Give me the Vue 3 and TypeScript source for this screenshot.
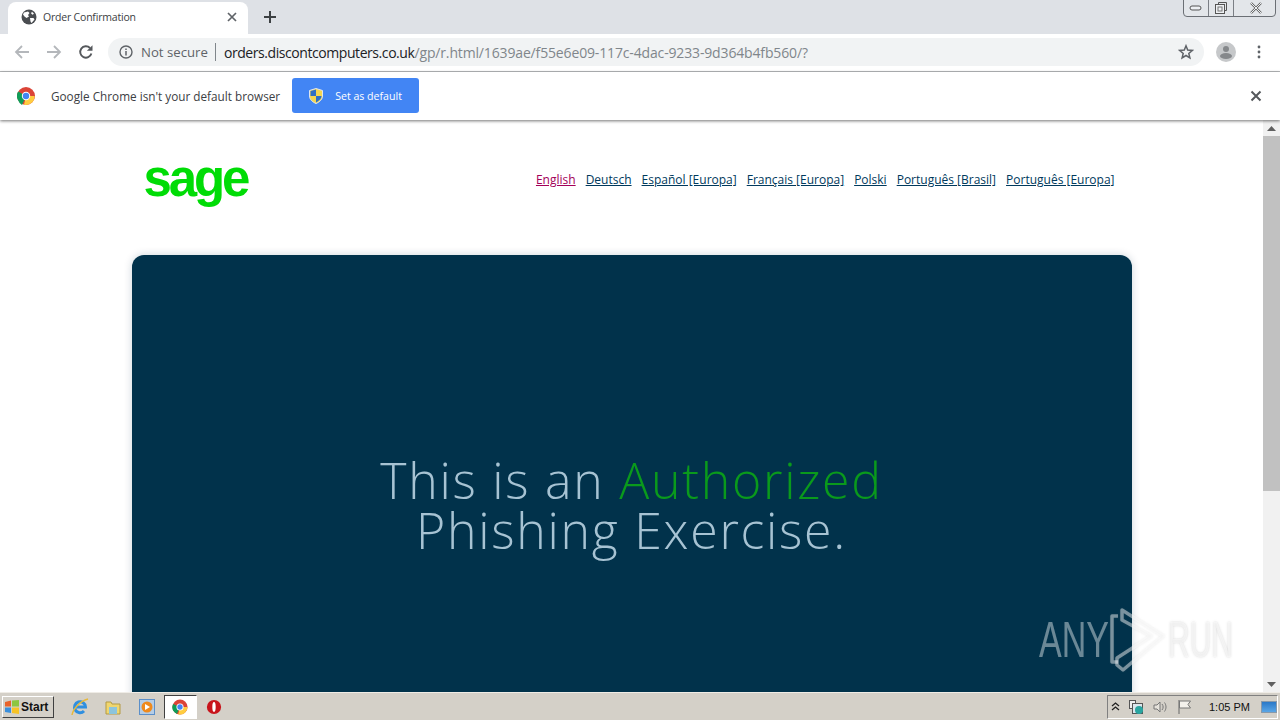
<script setup lang="ts">
const links: string[] = ['Deutsch', 'Español [Europa]', 'Français [Europa]', 'Polski', 'Português [Brasil]', 'Português [Europa]']
</script>

<template>
  <div class="screen">
    <header class="tabstrip">
      <div class="tab">
        <svg class="globe" viewBox="0 0 16 16" width="16" height="16">
          <circle cx="8" cy="8" r="7.5" fill="#4a4d51" />
          <path d="M3 3.5 7 2.5 8.5 4 7 6 8 7.5 5.5 9 3.5 7.5 2 5.5ZM9 9h3.5l1 1.5-3 3.5-1-1.5Z M11 2.8l2 2-1.5 1-1.5-1.5Z" fill="#fff" />
        </svg>
        <span class="tab-title">Order Confirmation</span>
        <svg class="tab-close" viewBox="0 0 10 10" width="10" height="10">
          <path d="M1 1l8 8M9 1l-8 8" stroke="#5f6368" stroke-width="1.7" />
        </svg>
      </div>
      <svg class="new-tab" viewBox="0 0 14 14" width="14" height="14">
        <path d="M7 1v12M1 7h12" stroke="#3c4043" stroke-width="2" />
      </svg>
      <div class="window-controls">
        <div class="win-btn win-min"><svg viewBox="0 0 14 8" width="14" height="8"><rect x="1" y="2" width="11" height="4" rx="2" fill="#eef0f3" stroke="#555" /></svg></div>
        <div class="win-btn win-max"><svg viewBox="0 0 14 14" width="14" height="14"><path d="M4.5 3.5V1.5h8v8h-2" fill="none" stroke="#555" /><rect x="1.5" y="3.5" width="9" height="9" fill="#eef0f3" stroke="#555" /><rect x="4" y="6" width="4" height="4" fill="none" stroke="#777" /></svg></div>
        <div class="win-btn win-close"><svg viewBox="0 0 14 12" width="14" height="12"><path d="M2 1l10 10M12 1L2 11" stroke="#666" stroke-width="2.4" /><path d="M2 1l10 10M12 1L2 11" stroke="#eef0f3" stroke-width="1" /></svg></div>
      </div>
    </header>

    <nav class="toolbar">
      <svg class="nav-icon" viewBox="0 0 16 16" width="16" height="16"><path d="M15 8H2M8 2 2 8l6 6" fill="none" stroke="#b4b7bb" stroke-width="1.8" /></svg>
      <svg class="nav-icon" viewBox="0 0 16 16" width="16" height="16"><path d="M1 8h13M8 2l6 6-6 6" fill="none" stroke="#b4b7bb" stroke-width="1.8" /></svg>
      <svg class="nav-icon" viewBox="0 0 16 16" width="16" height="16"><path d="M13.4 9.5A5.7 5.7 0 1 1 12 4" fill="none" stroke="#55585c" stroke-width="1.9" /><path d="M14.5 1.2v5.6H8.9Z" fill="#55585c" /></svg>
      <div class="omnibox">
        <svg class="info" viewBox="0 0 14 14" width="14" height="14"><circle cx="7" cy="7" r="6" fill="none" stroke="#5f6368" stroke-width="1.4" /><path d="M7 6v4.4M7 3.4v1.6" stroke="#5f6368" stroke-width="1.5" /></svg>
        <span class="not-secure">Not secure</span>
        <span class="divider"></span>
        <span class="url"><span class="host">orders.discontcomputers.co.uk</span>/gp/r.html/1639ae/f55e6e09-117c-4dac-9233-9d364b4fb560/?</span>
        <svg class="star" viewBox="0 0 16 16" width="16" height="16"><path d="M8 1.8 9.7 6l4.6.4-3.5 3 1.1 4.5L8 11.5l-3.9 2.4 1.1-4.5-3.5-3L6.300 6Z" fill="none" stroke="#5f6368" stroke-width="1.5" /></svg>
      </div>
      <div class="avatar">
        <svg viewBox="0 0 20 20" width="20" height="20"><circle cx="10" cy="10" r="10" fill="#c6c8ca" /><circle cx="10" cy="7" r="3" fill="#85888b" /><ellipse cx="10" cy="14" rx="6" ry="3" fill="#85888b" /></svg>
      </div>
      <svg class="menu" viewBox="0 0 4 14" width="4" height="14"><circle cx="2" cy="2" r="1.400" fill="#5f6368" /><circle cx="2" cy="7" r="1.400" fill="#5f6368" /><circle cx="2" cy="12" r="1.400" fill="#5f6368" /></svg>
    </nav>

    <section class="infobar">
      <svg class="chrome-logo" viewBox="0 0 18 18" width="18" height="18">
        <circle cx="9" cy="9" r="9" fill="#db4437" />
        <path d="M9 9 1.500 14 A9 9 0 0 1 1.200 4.500Z M1.200 4.500 9 9 5 18 A9 9 0 0 1 1 13Z" fill="#0f9d58" />
        <path d="M9 9h8.700A9 9 0 0 1 7 17.800Z" fill="#ffcd40" />
        <circle cx="9" cy="9" r="4.200" fill="#fff" />
        <circle cx="9" cy="9" r="3.200" fill="#4285f4" />
      </svg>
      <span class="infobar-text">Google Chrome isn't your default browser</span>
      <button class="default-btn">
        <svg viewBox="0 0 14 16" width="14" height="16">
          <path d="M7 .5 13.500 2.500V8c0 3.500-3 6-6.500 7.500C3.500 14 .5 11.500.5 8V2.500Z" fill="#f4d650" stroke="#dfe6f0" />
          <path d="M7 1.500v6.500H1.500V3ZM7 8h5.500c0 3-2.800 5-5.500 6.500Z" fill="#2f6fc4" />
        </svg>
        <span>Set as default</span>
      </button>
      <svg class="infobar-close" viewBox="0 0 12 12" width="12" height="12"><path d="M1.500 1.500l9 9M10.500 1.500l-9 9" stroke="#55585c" stroke-width="2" /></svg>
    </section>

    <main class="viewport">
      <div class="page">
        <div class="wrap">
          <div class="site-header">
            <span class="sage">sage</span>
            <div class="languages">
              <a class="lang current">English</a>
              <a v-for="l in links" :key="l" class="lang">{{ l }}</a>
            </div>
          </div>
          <div class="hero">
            <h1>This is an <span class="green">Authorized</span><br />Phishing Exercise.</h1>
          </div>
        </div>
      </div>
      <div class="scrollbar">
        <div class="arrow"><svg viewBox="0 0 9 5" width="9" height="5"><path d="M4.500 0 9 5H0Z" fill="#606060" /></svg></div>
        <div class="track"><div class="thumb"></div></div>
        <div class="arrow"><svg viewBox="0 0 9 5" width="9" height="5"><path d="M0 0h9L4.500 5Z" fill="#606060" /></svg></div>
      </div>
      <div class="watermark">
        <span class="any">ANY</span>
        <svg class="play" viewBox="0 0 58 68" width="58" height="68">
          <path d="M10 10H4v46h6" fill="none" stroke="#fff" stroke-opacity=".45" stroke-width="3.500" stroke-linejoin="round" />
          <path d="M14 4 55 30 15 64 9 59V52L43 30 14 14Z" fill="none" stroke="#fff" stroke-opacity=".45" stroke-width="3.500" stroke-linejoin="round" />
        </svg>
        <span class="run">RUN</span>
      </div>
    </main>

    <footer class="taskbar">
      <button class="start">
        <svg viewBox="0 0 16 16" width="16" height="16">
          <path d="M1 3 7 1.500V7.500H1Z" fill="#e8632b" /><path d="M8 1.500 15 1V7.500H8Z" fill="#8cc63f" /><path d="M1 8.500H7V14L1 13Z" fill="#3a8fdc" /><path d="M8 8.500H15V15L8 14Z" fill="#f7c325" />
        </svg>
        Start
      </button>
      <div class="task-icons">
        <span class="task"><svg viewBox="0 0 18 18" width="18" height="18"><path d="M4 9h10.500A5.500 5.500 0 1 0 13 13" fill="none" stroke="#2f8fe0" stroke-width="3" /><path d="M1 17C2 11 9 3 17 1" fill="none" stroke="#e8b93a" stroke-width="1.500" /></svg></span>
        <span class="task"><svg viewBox="0 0 18 18" width="18" height="18"><path d="M2 4h5l1 2h8v10H2Z" fill="#f0d66e" stroke="#b39a45" /><rect x="5" y="9" width="8" height="7" fill="#8cc4dc" /></svg></span>
        <span class="task"><svg viewBox="0 0 18 18" width="18" height="18"><rect x="1.500" y="1.500" width="15" height="15" fill="#b5cde6" stroke="#5b8fc9" /><circle cx="9" cy="9" r="5.500" fill="#ef8a1d" /><path d="M7 6l5 3-5 3Z" fill="#fff" /></svg></span>
        <span class="task active"><svg viewBox="0 0 18 18" width="16" height="16"><circle cx="9" cy="9" r="8.500" fill="#db4437" /><path d="M9 9 1.500 13.500A8.500 8.500 0 0 1 1.200 5.500ZM9 9l-3.500 8A8.500 8.500 0 0 1 1 12.500Z" fill="#0f9d58" /><path d="M9 9h8.500A8.500 8.500 0 0 1 7 17.300Z" fill="#ffcd40" /><circle cx="9" cy="9" r="4" fill="#fff" /><circle cx="9" cy="9" r="3" fill="#4285f4" /></svg></span>
        <span class="task"><svg viewBox="0 0 18 18" width="16" height="16"><circle cx="9" cy="9" r="8" fill="#c8141b" /><ellipse cx="9" cy="9" rx="1.900" ry="5.500" fill="#fff" /></svg></span>
      </div>
      <div class="tray">
        <svg viewBox="0 0 9 9" width="9" height="9"><path d="M1 4l3.500-3L8 4M1 8l3.500-3L8 8" fill="none" stroke="#222" stroke-width="1.300" /></svg>
        <svg viewBox="0 0 16 16" width="16" height="16"><rect x="1.500" y="1.500" width="6" height="8" fill="#eee" stroke="#555" /><rect x="4.500" y="4.500" width="10" height="10" fill="#dbe6ec" stroke="#555" /><circle cx="11" cy="11" r="4" fill="#2aa5a0" /></svg>
        <svg viewBox="0 0 16 16" width="16" height="16"><path d="M2 6h3l3-3v10l-3-3H2Z" fill="#e6e3dc" stroke="#777" /><path d="M10 5c1.500 2 1.500 4 0 6M12.500 3.500c2 3 2 6 0 9" fill="none" stroke="#777" /></svg>
        <svg viewBox="0 0 16 16" width="16" height="16"><path d="M3 1v14" stroke="#666" /><path d="M3.500 2h11L12 5.500l2.500 3.500h-11Z" fill="#f3f1ec" stroke="#777" /></svg>
        <span class="clock">1:05 PM</span>
        <span class="desktop"></span>
      </div>
    </footer>
  </div>
</template>

<style>
html, body { margin: 0; overflow: hidden; }
</style>

<style scoped>
.screen { width: 1280px; height: 720px; display: flex; flex-direction: column; overflow: hidden; background: #fff; font-family: "Open Sans", "Noto Sans", sans-serif; }

.tabstrip { height: 34px; flex: none; background: #dee1e6; display: flex; align-items: flex-end; padding-left: 8px; box-sizing: border-box; position: relative; }
.tab { width: 240px; height: 32px; background: #fff; border-radius: 8px 8px 0 0; display: flex; align-items: center; padding: 0 11px 3px 13px; box-sizing: border-box; }
.globe { flex: none; }
.tab-title { margin-left: 6px; font-size: 10.500px; letter-spacing: -.2px; color: #3c4043; flex: 1; white-space: nowrap; }
.tab-close { flex: none; }
.new-tab { margin: 0 0 10px 15px; }
.window-controls { position: absolute; top: -1px; right: 4px; width: 93px; height: 18px; display: grid; grid-template-columns: 25px 25px 43px; border: 1px solid #6b6f75; border-radius: 0 0 4px 4px; box-sizing: border-box; background: #e3e6ea; }
.win-btn { display: flex; align-items: center; justify-content: center; border-right: 1px solid #7b7f85; }
.win-close { border-right: none; }

.toolbar { height: 38px; flex: none; background: #fff; border-bottom: 1px solid #b9bbbd; box-sizing: border-box; display: flex; align-items: center; padding: 0 0 1px 14px; }
.nav-icon { flex: none; margin-right: 16px; }
.omnibox { margin-left: -2px; width: 1096px; height: 28px; background: #f1f3f4; border-radius: 14px; display: flex; align-items: center; padding: 0 10px 0 11px; box-sizing: border-box; font-size: 14px; white-space: nowrap; }
.info { flex: none; }
.not-secure { margin-left: 8px; color: #5f6368; font-size: 13.200px; }
.divider { width: 1px; height: 18px; background: #80868b; margin: 0 8px 0 7px; }
.url { flex: 1; color: #80868b; letter-spacing: -.15px; }
.host { color: #202124; letter-spacing: -.43px; }
.star { flex: none; }
.avatar { width: 20px; height: 20px; margin-left: 12px; flex: none; }
.menu { margin-left: 21px; flex: none; }

.infobar { height: 48px; flex: none; background: #fff; display: flex; align-items: center; padding: 0 18px 1px 17px; box-sizing: border-box; box-shadow: 0 1px 3px rgba(0,0,0,.55); position: relative; z-index: 2; }
.chrome-logo { flex: none; margin-top: 1px; }
.infobar-text { margin-left: 16px; font-size: 11.750px; color: #3c4043; white-space: nowrap; }
.default-btn { margin-left: 12px; width: 127px; height: 35px; border: none; background: #4285f4; border-radius: 3px; color: #fff; font: 10.600px "Open Sans", sans-serif; display: flex; align-items: center; gap: 12px; padding: 0 0 0 17px; box-sizing: border-box; }
.infobar-close { margin-left: auto; margin-top: 1px; }

.viewport { flex: 1; min-height: 0; display: flex; position: relative; overflow: hidden; }
.page { flex: 1; min-width: 0; overflow: hidden; }
.wrap { width: 1000px; margin: 0 auto; }
.site-header { height: 135px; display: flex; justify-content: space-between; padding: 29px 17px 0 12px; box-sizing: border-box; }
.sage { font: bold 51px/60px "Liberation Sans", sans-serif; color: #00dc06; letter-spacing: -3.100px; height: 60px; }
.languages { display: flex; gap: 10px; padding-top: 22px; font-size: 12px; line-height: 18px; white-space: nowrap; }
.lang { color: #00395c; text-decoration: underline; }
.current { color: #a30059; }
.hero { height: 500px; background: #01324b; border-radius: 12px; display: flex; align-items: center; justify-content: center; box-shadow: 0 0 8px rgba(0,47,74,.2); }
h1 { margin: 0; font-size: 50px; line-height: 50px; font-weight: 300; letter-spacing: 1.730px; color: #a7c3d3; text-align: center; }
.green { color: #0a9a1c; }

.scrollbar { width: 17px; flex: none; background: #f1f1f1; display: flex; flex-direction: column; }
.arrow { height: 16px; display: flex; align-items: center; justify-content: center; flex: none; }
.track { flex: 1; }
.thumb { height: 355px; background: #c1c1c1; }

.watermark { position: absolute; left: 1039px; top: 486px; width: 200px; height: 68px; display: grid; grid-template-columns: 69px 60px 71px; align-items: center; font: 50px/68px "Liberation Sans", sans-serif; pointer-events: none; }
.any, .run { display: block; transform: scaleX(.68); transform-origin: left; white-space: nowrap; }
.any { color: rgba(255,255,255,.42); }
.run { color: rgba(255,255,255,.6); transform: scaleX(.6); text-shadow: 0 0 3px rgba(120,120,120,.3); }
.play { filter: drop-shadow(0 0 1px rgba(120,120,120,.3)); }

.taskbar { height: 28px; flex: none; background: #d4d0c8; border-top: 1px solid #efece6; box-sizing: border-box; display: flex; align-items: center; position: relative; z-index: 3; }
.start { margin-left: 2px; width: 52px; height: 22px; display: flex; align-items: center; gap: 1px; padding: 0 0 0 1px; box-sizing: border-box; border: 1px solid; border-color: #fff #404040 #404040 #fff; background: #d4d0c8; font: bold 12px "Liberation Sans", sans-serif; color: #111; }
.task-icons { display: flex; margin-left: 9px; align-items: center; }
.task { width: 33.500px; height: 24px; display: flex; align-items: center; justify-content: center; flex: none; box-sizing: border-box; }
.task.active { background: #fff; border: 1px solid; border-color: #404040 #fff #fff #404040; }
.tray { margin-left: auto; margin-right: 2px; width: 171px; height: 24px; box-sizing: border-box; border: 1px solid; border-color: #808080 #fff #fff #808080; display: flex; align-items: center; padding-left: 3px; gap: 8px; }
.clock { font: 11px "Liberation Sans", sans-serif; margin-left: 9px; color: #111; white-space: nowrap; }
.desktop { width: 16px; height: 12px; margin-left: 3px; background: linear-gradient(#2a78c8, #5aa6e6); border: 1px solid #8899aa; box-sizing: border-box; }
</style>
